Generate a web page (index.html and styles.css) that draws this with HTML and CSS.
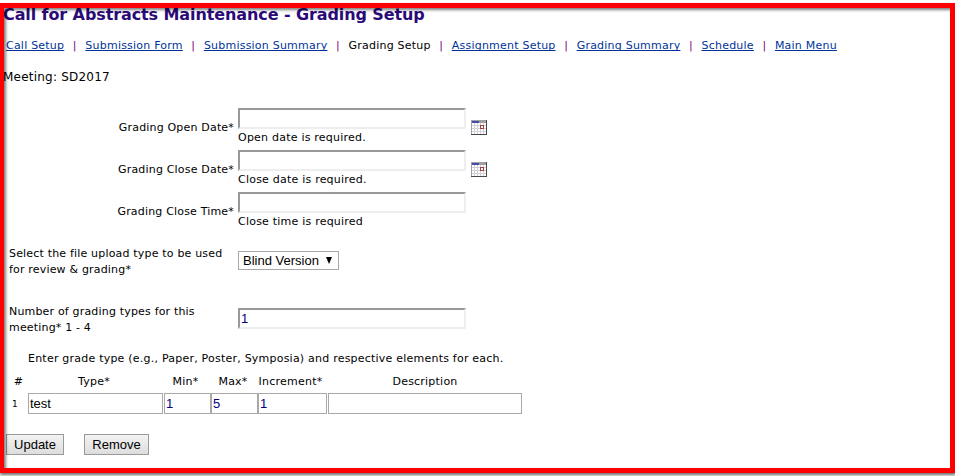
FILE: index.html
```
<!DOCTYPE html>
<html lang="en">
<head>
<meta charset="utf-8">
<title>Grading Setup</title>
<link rel="stylesheet" href="styles.css">
</head>
<body>
<main class="page">
  <h1>Call for Abstracts Maintenance - Grading Setup</h1>
  <nav>
    <a href="#">Call Setup</a><i>|</i><a href="#">Submission Form</a><i>|</i><a href="#">Submission Summary</a><i>|</i><span>Grading Setup</span><i>|</i><a href="#">Assignment Setup</a><i>|</i><a href="#">Grading Summary</a><i>|</i><a href="#">Schedule</a><i>|</i><a href="#">Main Menu</a>
  </nav>
  <p class="meeting">Meeting: SD2017</p>
  <form>
    <div class="row date">
      <label>Grading Open Date*</label>
      <div class="field"><input type="text"><small>Open date is required.</small></div>
      <svg class="cal" viewBox="0 0 16 15" shape-rendering="crispEdges"><path fill="#d4d0d8" d="M0 0h16v15H0z"/><path fill="#a0a0a0" d="M0 0h16v3H0zM0 0h1v15H0z"/><path fill="#444eb0" d="M1 1h7v2H1z"/><path fill="#fff" d="M1 3h2v2H1zM4 3h2v2H4zM7 3h2v2H7zM10 3h2v2h-2zM13 3h2v2h-2zM1 6h2v2H1zM4 6h2v2H4zM7 6h2v2H7zM13 6h2v2h-2zM1 9h2v2H1zM4 9h2v2H4zM7 9h2v2H7zM10 9h2v2h-2zM13 9h2v2h-2zM1 12h2v2H1zM4 12h2v2H4zM7 12h2v2H7zM10 12h2v2h-2zM13 12h2v2h-2z"/><path fill="#a04040" d="M9 5h4v4H9z"/><path fill="#fff" d="M10 6h2v2h-2z"/><path fill="#484848" d="M15 0h1v15H0v-1h15z"/></svg>
    </div>
    <div class="row date">
      <label>Grading Close Date*</label>
      <div class="field"><input type="text"><small>Close date is required.</small></div>
      <svg class="cal" viewBox="0 0 16 15" shape-rendering="crispEdges"><path fill="#d4d0d8" d="M0 0h16v15H0z"/><path fill="#a0a0a0" d="M0 0h16v3H0zM0 0h1v15H0z"/><path fill="#444eb0" d="M1 1h7v2H1z"/><path fill="#fff" d="M1 3h2v2H1zM4 3h2v2H4zM7 3h2v2H7zM10 3h2v2h-2zM13 3h2v2h-2zM1 6h2v2H1zM4 6h2v2H4zM7 6h2v2H7zM13 6h2v2h-2zM1 9h2v2H1zM4 9h2v2H4zM7 9h2v2H7zM10 9h2v2h-2zM13 9h2v2h-2zM1 12h2v2H1zM4 12h2v2H4zM7 12h2v2H7zM10 12h2v2h-2zM13 12h2v2h-2z"/><path fill="#a04040" d="M9 5h4v4H9z"/><path fill="#fff" d="M10 6h2v2h-2z"/><path fill="#484848" d="M15 0h1v15H0v-1h15z"/></svg>
    </div>
    <div class="row date">
      <label>Grading Close Time*</label>
      <div class="field"><input type="text"><small>Close time is required</small></div>
    </div>
    <div class="row upload">
      <label>Select the file upload type to be used<br>for review &amp; grading*</label>
      <div class="select">Blind Version<svg viewBox="0 0 6 7"><path d="M0 0h6L3 7z"/></svg></div>
    </div>
    <div class="row count">
      <label>Number of grading types for this<br>meeting* 1 - 4</label>
      <input type="text" value="1">
    </div>
    <p class="hint">Enter grade type (e.g., Paper, Poster, Symposia) and respective elements for each.</p>
    <div class="grades heads">
      <span>#</span><span>Type*</span><span>Min*</span><span>Max*</span><span>Increment*</span><span>Description</span>
    </div>
    <div class="grades cells">
      <span>1</span><input class="type" type="text" value="test"><input type="text" value="1"><input type="text" value="5"><input type="text" value="1"><input class="desc" type="text">
    </div>
    <div class="actions">
      <button type="button">Update</button>
      <button type="button">Remove</button>
    </div>
  </form>
</main>
<div class="frame"></div>
</body>
</html>
```
FILE: styles.css
```
* { box-sizing: border-box; }
body {
  margin: 0;
  height: 476px;
  overflow: hidden;
  background: #fff;
  color: #000;
  font: 11px/16px "DejaVu Sans", Verdana, sans-serif;
  letter-spacing: 0.22px;
  white-space: nowrap;
}
h1 {
  margin: 0;
  padding: 5px 0 0 3px;
  height: 38px;
  font-size: 16px;
  line-height: 20px;
  letter-spacing: -0.1px;
  color: #2b0a78;
}
nav { display: flex; padding-left: 6px; }
nav a { color: #003399; text-decoration: underline; text-decoration-skip-ink: none; }
nav i { width: 21.1px; text-align: center; font-style: normal; color: #800080; }
.meeting { margin: 15px 0 23px 3px; font-size: 12px; }
.row { display: flex; }
.row label { flex: none; width: 238px; letter-spacing: 0.18px; }
input, button, .select { font: 13px "Liberation Sans", Arial, sans-serif; letter-spacing: 0; }
input {
  display: block;
  margin: 0;
  width: 228px;
  height: 21px;
  padding: 0 1px;
  color: #000080;
  background: #fff;
  border: 2px solid;
  border-color: #999 #eee #eee #999;
  border-radius: 0;
  outline: 0;
}
.date { height: 42px; }
.date label { padding: 12px 4px 0 0; text-align: right; }
.field small { display: block; padding-top: 1px; font-size: 11px; line-height: 16px; }
.cal { width: 16px; height: 15px; margin: 12px 0 0 5px; }
.upload { padding-top: 12px; }
.upload label, .count label { padding-left: 9px; }
.select {
  display: flex;
  align-items: center;
  justify-content: space-between;
  width: 101px;
  height: 19px;
  margin-top: 5px;
  padding: 0 6px 0 4px;
  border: 1px solid #a9a9a9;
}
.select svg { width: 6px; height: 7px; }
.count { margin-top: 26px; }
.count input { margin-top: 4px; }
.hint { margin: 15px 0 0 28px; }
.grades { display: grid; grid-template-columns: 28px 136px 47px 47px 70px 194px; }
.heads { margin-top: 7px; text-align: center; }
.heads span:first-child { padding-left: 9px; }
.heads span:nth-child(2) { padding-right: 4px; }
.heads span:nth-child(3) { padding-right: 4px; }
.heads span:nth-child(4) { padding-right: 3px; }
.heads span:nth-child(5) { padding-right: 5px; }
.cells { margin-top: 3px; }
.cells span { padding: 3px 0 0 12px; font-size: 9px; letter-spacing: 0; }
.cells input { width: 100%; border: 1px solid #a9a9a9; }
.cells .type { width: 135px; color: #000; }
.cells input:nth-child(5) { width: 69px; }
.actions { display: flex; gap: 20px; margin: 20px 0 0 6px; }
button {
  width: 58px;
  height: 21px;
  padding: 0;
  color: #000;
  background: linear-gradient(#f3f3f3, #ddd);
  border: 1px solid #9a9a9a;
  border-radius: 0;
}
button + button { width: 65px; }
.frame {
  position: absolute;
  top: 3px;
  left: -1px;
  width: 956px;
  height: 470px;
  border: 5px solid #f00;
  box-shadow: inset 2px 2px 3px rgba(0, 0, 0, 0.5), 1px 2px 3px rgba(0, 0, 0, 0.6);
  pointer-events: none;
}
```
